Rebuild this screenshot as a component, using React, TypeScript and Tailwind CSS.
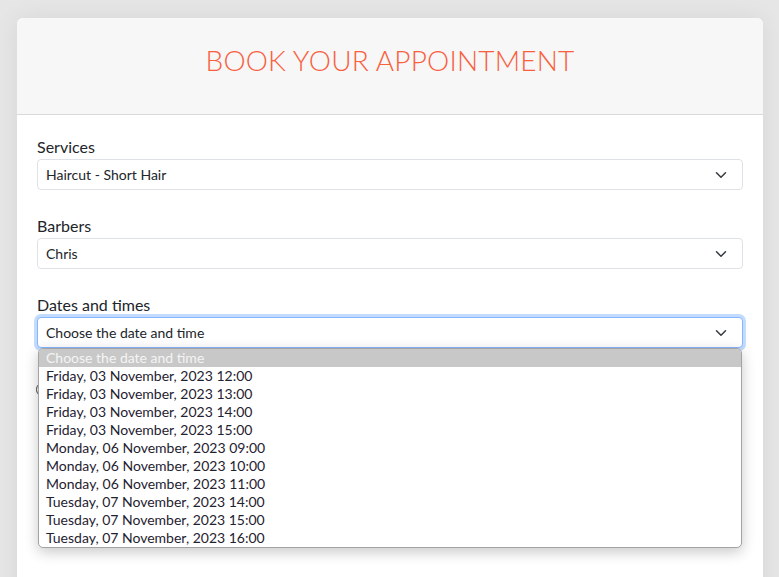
import React from 'react';

const dates = [
  'Friday, 03 November, 2023 12:00',
  'Friday, 03 November, 2023 13:00',
  'Friday, 03 November, 2023 14:00',
  'Friday, 03 November, 2023 15:00',
  'Monday, 06 November, 2023 09:00',
  'Monday, 06 November, 2023 10:00',
  'Monday, 06 November, 2023 11:00',
  'Tuesday, 07 November, 2023 14:00',
  'Tuesday, 07 November, 2023 15:00',
  'Tuesday, 07 November, 2023 16:00',
];

const Chevron = () => (
  <svg width="16" height="12" viewBox="0 0 16 16" fill="none" className="shrink-0">
    <path d="m2 5 6 6 6-6" stroke="#343a40" strokeWidth="2" strokeLinecap="round" strokeLinejoin="round" />
  </svg>
);

const SelectBox = ({ value, focused }: { value: string; focused?: boolean }) => (
  <div
    className={`flex h-[31px] items-center justify-between rounded-[4px] border bg-white pl-[8px] pr-[13px] text-[14px] text-[#212529] ${
      focused ? 'border-[#86b7fe] ring-[3px] ring-[#0d6efd]/25' : 'border-[#dee2e6]'
    }`}
  >
    <span>{value}</span>
    <Chevron />
  </div>
);

export default function App() {
  return (
    <div
      className="h-[577px] overflow-hidden bg-[#e6e6e6] pt-[18px]"
      style={{ fontFamily: 'Lato, "Open Sans", sans-serif' }}
    >
      <div className="ml-[17px] w-[746px] rounded-t-[6px] bg-white shadow-[0_0_24px_rgba(0,0,0,0.07)]">
        {/* header */}
        <div className="flex h-[97px] items-center justify-center rounded-t-[6px] border-b border-[#d9d9d9] bg-[#f7f7f7] pb-[12px]">
          <h1 className="text-[28px] font-light tracking-[0.2px] text-[#f9603e]">BOOK YOUR APPOINTMENT</h1>
        </div>

        {/* body */}
        <div className="px-5 pt-5 pb-[240px]">
          <div className="mb-6">
            <label className="block text-[16px] leading-6 text-[#212529]">Services</label>
            <SelectBox value="Haircut - Short Hair" />
          </div>
          <div className="mb-6">
            <label className="block text-[16px] leading-6 text-[#212529]">Barbers</label>
            <SelectBox value="Chris" />
          </div>
          <div className="relative">
            <label className="block text-[16px] leading-6 text-[#212529]">Dates and times</label>
            <SelectBox value="Choose the date and time" focused />
            {/* open dropdown */}
            <div className="absolute left-[1px] top-[55px] z-10 w-[704px] overflow-hidden rounded-[5px] border border-[#a3a3a3] bg-white shadow-[0_4px_14px_rgba(0,0,0,0.22)]">
              <div className="h-[18px] bg-[#c8c8c8] pl-[7px] text-[14px] leading-[18px] text-[#f4f4f4]">
                Choose the date and time
              </div>
              {dates.map((d) => (
                <div key={d} className="h-[18px] pl-[7px] text-[14px] leading-[18px] text-[#1f2230]">
                  {d}
                </div>
              ))}
            </div>
          </div>

          {/* control hidden under the dropdown */}
          <div className="mt-[34px] -ml-[1px] h-[15px] w-[15px] rounded-full border border-[#444]" />
        </div>
      </div>
    </div>
  );
}
